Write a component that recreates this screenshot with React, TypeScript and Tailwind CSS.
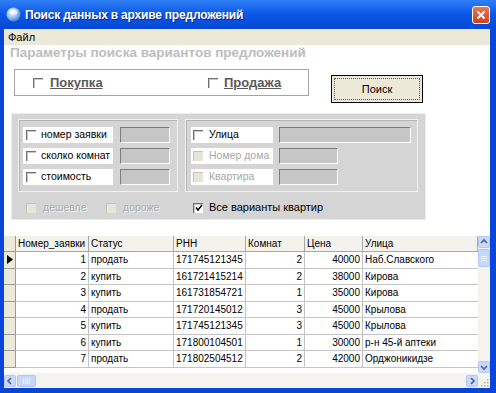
import React from "react";

const rows = [
  { id: 1, status: "продать", rnn: "171745121345", rooms: 2, price: 40000, street: "Наб.Славского" },
  { id: 2, status: "купить", rnn: "161721415214", rooms: 2, price: 38000, street: "Кирова" },
  { id: 3, status: "купить", rnn: "161731854721", rooms: 1, price: 35000, street: "Кирова" },
  { id: 4, status: "продать", rnn: "171720145012", rooms: 3, price: 45000, street: "Крылова" },
  { id: 5, status: "купить", rnn: "171745121345", rooms: 3, price: 45000, street: "Крылова" },
  { id: 6, status: "купить", rnn: "171800104501", rooms: 1, price: 30000, street: "р-н 45-й аптеки" },
  { id: 7, status: "продать", rnn: "171802504512", rooms: 2, price: 42000, street: "Орджоникидзе" },
];

function Check({ checked, disabled }: { checked?: boolean; disabled?: boolean }) {
  if (disabled) {
    return <span className="inline-block w-[10px] h-[10px] shrink-0 bg-[#e8e6d8] border-t border-l border-[#c4c2b4]" />;
  }
  return (
    <span className="inline-flex w-[10px] h-[10px] shrink-0 items-center justify-center bg-white border-t border-l border-[#707070] shadow-[inset_1px_1px_0_#c8c8c8]">
      {checked && (
        <svg width="8" height="8" viewBox="0 0 8 8">
          <path d="M1 3.5 L3 6 L7 1" stroke="#000" strokeWidth="1.6" fill="none" />
        </svg>
      )}
    </span>
  );
}

function SunkenInput({ w }: { w: string }) {
  return <div className={`${w} h-full bg-[#c6c6c6] border-t border-l border-[#7c7c7c] border-b border-r border-b-white border-r-white`} />;
}

function Arrow({ dir }: { dir: "up" | "down" | "left" | "right" }) {
  const d =
    dir === "up" ? "M2 6 L5 3 L8 6" : dir === "down" ? "M2 4 L5 7 L8 4" : dir === "left" ? "M6 2 L3 5 L6 8" : "M4 2 L7 5 L4 8";
  return (
    <div className="w-[12px] h-[12px] shrink-0 flex items-center justify-center rounded-[2px] bg-[#c9d8fc] border border-[#b4c7f5]">
      <svg width="10" height="10" viewBox="0 0 10 10">
        <path d={d} stroke="#4d6185" strokeWidth="1.6" fill="none" />
      </svg>
    </div>
  );
}

export default function App() {
  return (
    <div className="w-[496px] h-[393px] overflow-hidden flex flex-col bg-[#0846d8] font-['Liberation_Sans',Arial,sans-serif] text-black">
      {/* title bar */}
      <div className="h-[29px] shrink-0 flex items-center pl-[6px] pr-[6px] bg-gradient-to-b from-[#2f7ff5] via-[#0a57e6] to-[#0448d4]">
        <svg width="15" height="15" viewBox="0 0 15 15" className="shrink-0">
          <defs>
            <radialGradient id="g" cx="0.4" cy="0.35" r="0.7">
              <stop offset="0" stopColor="#ffffff" />
              <stop offset="0.5" stopColor="#9ec6f2" />
              <stop offset="1" stopColor="#3a78c8" />
            </radialGradient>
          </defs>
          <circle cx="7.5" cy="7.5" r="7" fill="url(#g)" />
          <ellipse cx="7.5" cy="5" rx="4" ry="2.5" fill="#ffffff" opacity="0.7" />
        </svg>
        <span className="ml-[4px] text-white font-bold text-[12px] tracking-[-0.2px] [text-shadow:1px_1px_0_#0a2a80]">
          Поиск данных в архиве предложений
        </span>
        <div className="ml-auto w-[18px] h-[18px] rounded-[3px] border border-white bg-gradient-to-b from-[#e97755] to-[#c8421a] flex items-center justify-center">
          <svg width="10" height="10" viewBox="0 0 10 10">
            <path d="M1.5 1.5 L8.5 8.5 M8.5 1.5 L1.5 8.5" stroke="#fff" strokeWidth="1.8" />
          </svg>
        </div>
      </div>

      {/* body */}
      <div className="ml-[4px] mr-[6px] h-[359px] flex flex-col bg-white">
        <div className="h-[16px] shrink-0 bg-[#ece9d8] flex items-center pl-[4px] text-[11px]">Файл</div>

        <div className="mt-[1px] h-[14px] pl-[6px] text-[13.5px] leading-[14px] font-bold text-[#bdbdbd] whitespace-nowrap">
          Параметры поиска вариантов предложений
        </div>

        <div className="mt-[9px] flex items-start">
          <div className="ml-[10px] w-[295px] h-[27px] border border-[#a4a4a4] bg-white flex items-center pl-[18px]">
            <div className="w-[175px] flex items-center gap-[7px]">
              <Check />
              <span className="text-[13px] font-bold text-[#5a5a5a] underline">Покупка</span>
            </div>
            <div className="flex items-center gap-[6px]">
              <Check />
              <span className="text-[13px] font-bold text-[#5a5a5a] underline">Продажа</span>
            </div>
          </div>
          <div className="ml-[22px] mt-[6px] w-[92px] h-[28px] border border-black bg-[#ece9d8] p-[2px]">
            <div className="w-full h-full border border-dotted border-[#555] flex items-center justify-center text-[11px]">
              Поиск
            </div>
          </div>
        </div>

        {/* gray panel */}
        <div className="mt-[10px] ml-[7px] w-[415px] h-[107px] bg-[#d5d5d5] border border-[#ededed] pl-[6px] pt-[5px] text-[10.5px] whitespace-nowrap">
          <div className="flex gap-[7px]">
            <div className="w-[160px] h-[73px] border border-[#f2f2f2] shadow-[inset_1px_1px_0_#b4b4b4] pl-[4px] pt-[7px] flex flex-col gap-[5px]">
              {["номер заявки", "сколко комнат", "стоимость"].map((t) => (
                <div key={t} className="flex items-center h-[16px]">
                  <div className="w-[90px] h-full bg-white flex items-center pl-[3px] gap-[5px]">
                    <Check />
                    <span>{t}</span>
                  </div>
                  <div className="ml-[7px] h-full">
                    <SunkenInput w="w-[50px]" />
                  </div>
                </div>
              ))}
            </div>
            <div className="w-[233px] h-[73px] border border-[#f2f2f2] shadow-[inset_1px_1px_0_#b4b4b4] pl-[5px] pt-[7px] flex flex-col gap-[5px]">
              <div className="flex items-center h-[16px]">
                <div className="w-[82px] h-full bg-white flex items-center pl-[2px] gap-[6px]">
                  <Check />
                  <span>Улица</span>
                </div>
                <div className="ml-[6px] h-full">
                  <SunkenInput w="w-[132px]" />
                </div>
              </div>
              {["Номер дома", "Квартира"].map((t) => (
                <div key={t} className="flex items-center h-[16px]">
                  <div className="w-[82px] h-full bg-white flex items-center pl-[2px] gap-[6px]">
                    <Check disabled />
                    <span className="text-[#a6a6a6]">{t}</span>
                  </div>
                  <div className="ml-[6px] h-full">
                    <SunkenInput w="w-[59px]" />
                  </div>
                </div>
              ))}
            </div>
          </div>
          <div className="mt-[9px] h-[13px] flex items-center">
            <div className="ml-[8px] w-[80px] flex items-center gap-[7px]">
              <Check disabled />
              <span className="text-[#ababab] [text-shadow:1px_1px_0_#f4f4f4]">дешевле</span>
            </div>
            <div className="w-[87px] flex items-center gap-[7px]">
              <Check disabled />
              <span className="text-[#ababab] [text-shadow:1px_1px_0_#f4f4f4]">дороже</span>
            </div>
            <div className="flex items-center gap-[6px] text-[11px]">
              <Check checked />
              <span>Все варианты квартир</span>
            </div>
          </div>
        </div>

        {/* grid */}
        <div className="mt-[16px] h-[152px] flex flex-col text-[10px]">
          <div className="h-[137px] flex">
            <div className="w-[474px] bg-white">
              <div className="grid grid-cols-[12px_73px_85px_72px_59px_58px_115px]">
                <div className="h-[16px] bg-[#ece9d8] border-r border-b border-[#9a9a9a]" />
                {["Номер_заявки", "Статус", "РНН", "Комнат", "Цена", "Улица"].map((h) => (
                  <div key={h} className="h-[16px] bg-[#f3f2ec] border-r border-b border-[#a8a8a8] pl-[2px] flex items-center truncate">
                    {h}
                  </div>
                ))}
                {rows.map((r, i) => (
                  <React.Fragment key={r.id}>
                    <div className="h-[16.5px] bg-[#ece9d8] border-r border-b border-[#9a9a9a] flex items-center justify-center">
                      {i === 0 && (
                        <svg width="6" height="9" viewBox="0 0 6 9">
                          <path d="M0 0 L6 4.5 L0 9 Z" fill="#000" />
                        </svg>
                      )}
                    </div>
                    <div className="h-[16.5px] border-r border-b border-[#c4c4c4] pr-[2px] flex items-center justify-end">{r.id}</div>
                    <div className="h-[16.5px] border-r border-b border-[#c4c4c4] pl-[2px] flex items-center">{r.status}</div>
                    <div className="h-[16.5px] border-r border-b border-[#c4c4c4] pl-[2px] flex items-center">{r.rnn}</div>
                    <div className="h-[16.5px] border-r border-b border-[#c4c4c4] pr-[2px] flex items-center justify-end">{r.rooms}</div>
                    <div className="h-[16.5px] border-r border-b border-[#c4c4c4] pr-[2px] flex items-center justify-end">{r.price}</div>
                    <div className="h-[16.5px] border-b border-[#c4c4c4] pl-[2px] flex items-center">{r.street}</div>
                  </React.Fragment>
                ))}
              </div>
            </div>
            <div className="w-[12px] flex flex-col bg-[#f4f3ee]">
              <Arrow dir="up" />
              <div className="mt-[1px] h-[18px] rounded-[2px] bg-[#c6d7fc] border border-[#b2c5f3] flex flex-col items-center justify-center gap-[1px]">
                <div className="w-[6px] h-[1px] bg-[#eef3ff]" />
                <div className="w-[6px] h-[1px] bg-[#eef3ff]" />
                <div className="w-[6px] h-[1px] bg-[#eef3ff]" />
              </div>
              <div className="flex-1" />
              <Arrow dir="down" />
            </div>
          </div>
          <div className="h-[15px] flex items-center bg-[#f4f3ee]">
            <Arrow dir="left" />
            <div className="ml-[1px] w-[19px] h-[12px] rounded-[2px] bg-[#c6d7fc] border border-[#b2c5f3] flex items-center justify-center gap-[1px]">
              <div className="w-[1px] h-[6px] bg-[#eef3ff]" />
              <div className="w-[1px] h-[6px] bg-[#eef3ff]" />
              <div className="w-[1px] h-[6px] bg-[#eef3ff]" />
              <div className="w-[1px] h-[6px] bg-[#eef3ff]" />
            </div>
            <div className="flex-1" />
            <Arrow dir="right" />
            <div className="w-[12px] h-full flex items-end justify-end p-[1px]">
              <svg width="10" height="10" viewBox="0 0 10 10">
                <g fill="#b8b5a6">
                  <rect x="8" y="2" width="1.5" height="1.5" />
                  <rect x="5" y="5" width="1.5" height="1.5" />
                  <rect x="8" y="5" width="1.5" height="1.5" />
                  <rect x="2" y="8" width="1.5" height="1.5" />
                  <rect x="5" y="8" width="1.5" height="1.5" />
                  <rect x="8" y="8" width="1.5" height="1.5" />
                </g>
              </svg>
            </div>
          </div>
        </div>
      </div>
    </div>
  );
}
